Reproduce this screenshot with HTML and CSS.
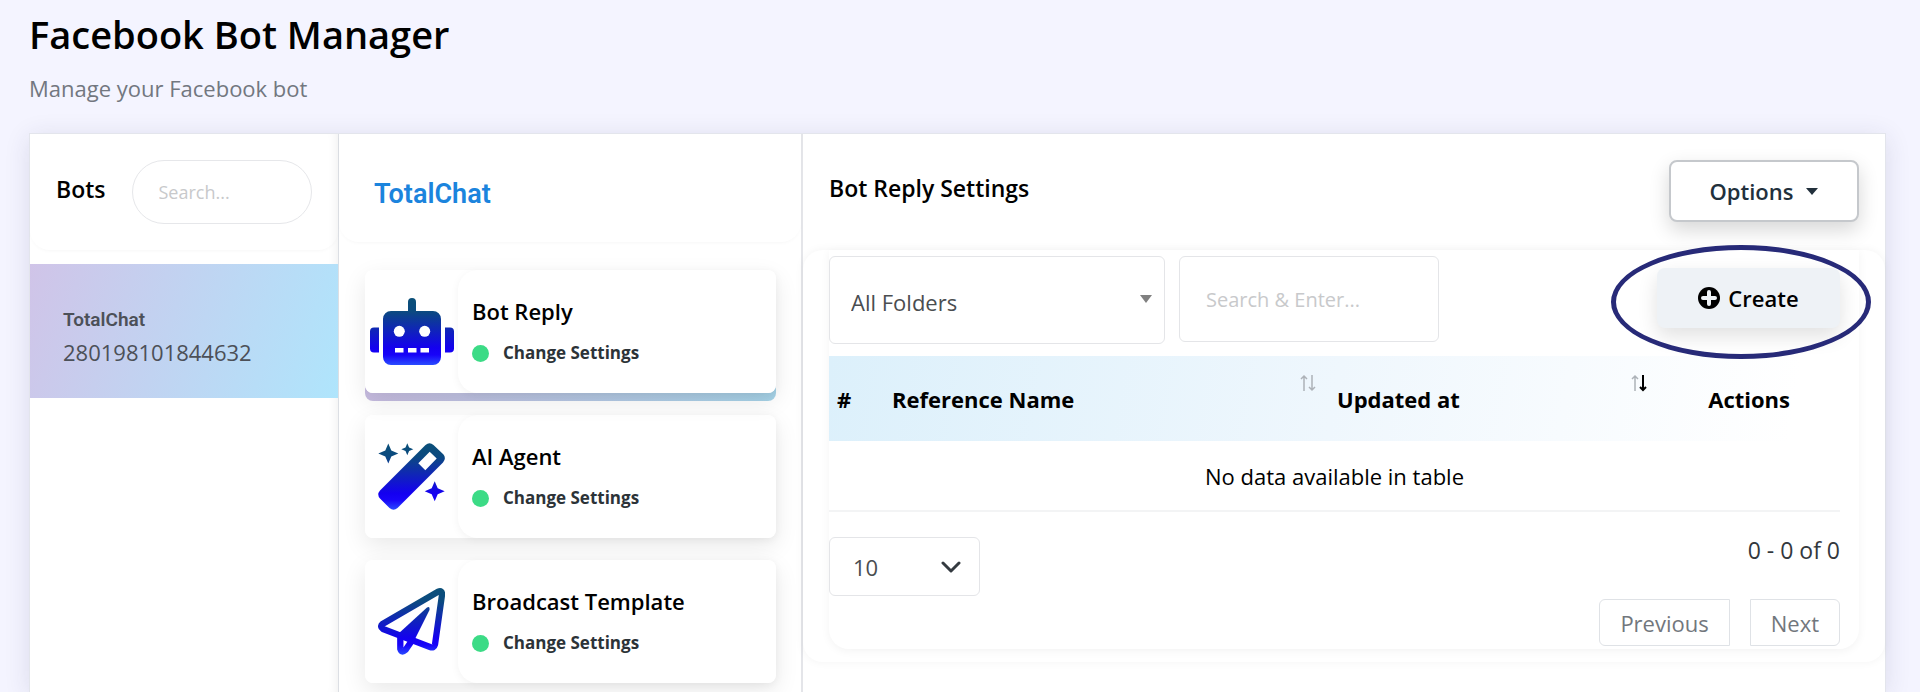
FILE: index.html
```html
<!DOCTYPE html>
<html lang="en">
<head>
  <meta charset="UTF-8" />
  <meta name="viewport" content="width=device-width, initial-scale=1.0"/>
  <title>Facebook Bot Manager</title>
  <link rel="stylesheet" href="styles.css">
</head>
<body>

  <header class="page-header">
    <h1>Facebook Bot Manager</h1>
    <p>Manage your Facebook bot</p>
  </header>

  <main class="panel">
    <!-- Bot list -->
    <section class="bots">
      <div class="bots-header">
        <h2><label for="botSearch">Bots</label></h2>
        <input type="text" id="botSearch" class="bot-search" placeholder="Search..." />
      </div>
      <a href="#" class="bot-item active">
        <strong>TotalChat</strong>
        <span>280198101844632</span>
      </a>
    </section>

    <!-- Settings menu -->
    <section class="menu">
      <div class="menu-header">
        <a href="#" class="page-name">TotalChat</a>
      </div>
      <div class="menu-list">
        <div class="card selected">
          <div class="card-icon">
            <svg width="84" height="68" viewBox="0 0 84 68">
              <defs>
                <linearGradient id="blue" gradientUnits="userSpaceOnUse" x1="0" y1="0" x2="0" y2="67">
                  <stop offset="0" stop-color="#0b5078" />
                  <stop offset="0.2" stop-color="#0b4a80" />
                  <stop offset="0.75" stop-color="#1400f0" />
                  <stop offset="0.85" stop-color="#1804f8" />
                  <stop offset="1" stop-color="#2a4cff" />
                </linearGradient>
              </defs>
              <g fill="url(#blue)">
                <path d="M38 13V4a4 4 0 0 1 8 0v9h17a8 8 0 0 1 8 8v38a8 8 0 0 1-8 8H21a8 8 0 0 1-8-8V21a8 8 0 0 1 8-8z" />
                <path d="M4 29.500h5v25H4a4 4 0 0 1-4-4v-17a4 4 0 0 1 4-4zM75 29.500h5a4 4 0 0 1 4 4v17a4 4 0 0 1-4 4h-5z" />
              </g>
              <g fill="#fff">
                <circle cx="29.300" cy="33.300" r="5.500" />
                <circle cx="54.700" cy="33.300" r="5.500" />
                <path d="M25 50h8.500v4.500H25zM38 50h8.500v4.500H38zM50.500 50H59v4.500h-8.500z" />
              </g>
            </svg>
          </div>
          <div class="card-body">
            <h3>Bot Reply</h3>
            <a href="#"><i class="dot"></i>Change Settings</a>
          </div>
        </div>

        <div class="card">
          <div class="card-icon">
            <svg width="67" height="67" viewBox="0 0 67 67" fill="url(#blue)">
              <path fill-rule="evenodd" d="M47.500 2Q51.500-1.500 55.500 2L65.500 11.500Q68.500 15.500 65 19.500L19.500 65Q15.500 68.500 11.500 65L2 55.500Q-1.500 51.500 2 47.500ZM51.700 8.700L40.300 20.300L47.300 27.300L58.700 15.500Z" />
              <path d="M10.300 .6L13.300 7.600L20.300 10.600L13.300 13.600L10.300 20.600L7.300 13.600L.3 10.600L7.300 7.600Z" />
              <path d="M29.300 .3L31.100 4.500L35.300 6.300L31.100 8.100L29.300 12.300L27.500 8.100L23.300 6.300L27.500 4.500Z" />
              <path d="M56.700 38.300L59.700 45.300L66.700 48.300L59.700 51.300L56.700 58.300L53.700 51.300L46.700 48.300L53.700 45.300Z" />
            </svg>
          </div>
          <div class="card-body">
            <h3>AI Agent</h3>
            <a href="#"><i class="dot"></i>Change Settings</a>
          </div>
        </div>

        <div class="card">
          <div class="card-icon">
            <svg width="67" height="67" viewBox="0 0 67 67">
              <path fill="none" stroke="url(#blue)" stroke-width="6.300" stroke-linejoin="round" d="M4.500 36L60 3.700Q64.500 2 64 7L57 56.500Q56 60.500 52 59L5 41Q1.500 38.500 4.500 36Z" />
              <path fill="none" stroke="url(#blue)" stroke-width="6.300" stroke-linejoin="round" d="M22.300 46V61Q23.500 65.500 27.500 62L35 51" />
              <path fill="url(#blue)" d="M49 19.500Q52 17.500 51.500 22L36 53L20 46Z" />
            </svg>
          </div>
          <div class="card-body">
            <h3>Broadcast Template</h3>
            <a href="#"><i class="dot"></i>Change Settings</a>
          </div>
        </div>
      </div>
    </section>

    <!-- Bot reply settings -->
    <section class="settings">
      <div class="settings-header">
        <h2>Bot Reply Settings</h2>
        <button class="options">Options <i class="caret"></i></button>
      </div>

      <div class="settings-body">
        <div class="table-card">
          <div class="filters">
            <select class="folders" aria-label="Folder">
              <option>All Folders</option>
            </select>
            <input type="text" class="search" placeholder="Search &amp; Enter..." aria-label="Search" />
            <div class="create-wrap">
              <button class="create">
                <svg width="22" height="22" viewBox="0 0 22 22">
                  <circle cx="11" cy="11" r="11" />
                  <path d="M11 5v12M5 11h12" stroke="#eef2f6" stroke-width="4" stroke-linecap="round" />
                </svg>
                Create
              </button>
              <span class="highlight"></span>
            </div>
          </div>

          <table>
            <thead>
              <tr>
                <th class="col-id">#</th>
                <th class="col-name"><div class="th">Reference Name
                  <svg width="18" height="18" viewBox="0 0 18 18" fill="none" stroke="#adb2b8" stroke-width="1.500">
                    <path d="M5 17V2M2 5l3-3 3 3" />
                    <path d="M13 1v15M10 13l3 3 3-3" />
                  </svg></div>
                </th>
                <th class="col-date"><div class="th">Updated at
                  <svg width="18" height="18" viewBox="0 0 18 18" fill="none" stroke="#adb2b8" stroke-width="1.500">
                    <path d="M5 17V2M2 5l3-3 3 3" />
                    <path d="M13 1v15M10 13l3 3 3-3" stroke="#000" stroke-width="2" />
                  </svg></div>
                </th>
                <th class="col-actions">Actions</th>
              </tr>
            </thead>
            <tbody>
              <tr>
                <td colspan="4">No data available in table</td>
              </tr>
            </tbody>
          </table>

          <div class="table-footer">
            <select class="page-size" aria-label="Rows per page">
              <option>10</option>
            </select>
            <div class="paging">
              <p>0 - 0 of 0</p>
              <div class="pages">
                <button class="prev">Previous</button>
                <button class="next">Next</button>
              </div>
            </div>
          </div>
        </div>
      </div>
    </section>
  </main>

</body>
</html>
```

FILE: styles.css
```css
* {
  box-sizing: border-box;
}

body {
  font-family: 'Segoe UI', 'Open Sans', 'Noto Sans', sans-serif;
  font-size: 22px;
  line-height: 32px;
  margin: 0;
  padding: 0 34px 0 29px;
  min-height: 100vh;
  display: flex;
  flex-direction: column;
  background-color: #f4f4ff;
  color: #000;
}

h1, h2, h3, p {
  margin: 0;
}

h2 {
  font-size: 23px;
  font-weight: 600;
}

h3 {
  font-size: 22px;
  font-weight: 600;
}

a {
  text-decoration: none;
}

button, input, select {
  font-family: inherit;
  font-size: 22px;
}

.page-header {
  padding: 6px 0 29px;
}

.page-header h1 {
  font-size: 38px;
  font-weight: 600;
  line-height: 56px;
}

.page-header p {
  margin-top: 10px;
  color: #727780;
}

.panel {
  position: relative;
  z-index: 0;
  flex: 1;
  display: grid;
  grid-template-columns: 309px 464px 1fr;
  background-color: #fff;
  border: 1px solid #e3e5ec;
  border-bottom: none;
  box-shadow: 0 4px 24px rgba(40, 40, 90, 0.12);
}

/* Bot list */
.bots {
  border-right: 1px solid #dcdfe4;
  box-shadow: inset -10px 0 12px -10px rgba(0, 0, 0, 0.08);
}

.bots-header {
  display: flex;
  align-items: center;
  gap: 26px;
  height: 116px;
  padding: 0 26px;
  border-radius: 0 0 20px 20px;
  box-shadow: 0 2px 4px -2px rgba(0, 0, 0, 0.05);
}

.bots-header h2 {
  padding-bottom: 6px;
}

.bot-search {
  flex: 1;
  min-width: 0;
  height: 64px;
  padding: 0 26px;
  font-size: 18px;
  border: 1px solid #e6e7ea;
  border-radius: 32px;
  background-color: #fff;
}

::placeholder {
  color: #c8c9cb;
  opacity: 1;
}

.bot-item {
  display: block;
  margin-top: 14px;
  padding: 40px 33px 30px;
  color: #4c5058;
}

.bot-item.active {
  background: linear-gradient(110deg, #d0c4e8, #afe5fc);
}

.bot-item strong {
  display: block;
  font-family: Roboto, sans-serif;
  font-size: 19px;
  font-weight: 600;
  line-height: 32px;
}

.bot-item span {
  display: block;
}

/* Settings menu */
.menu {
  border-right: 2px solid #e4e5e9;
}

.menu-header {
  height: 108px;
  padding: 44px 35px 0;
  border-radius: 0 0 20px 20px;
  box-shadow: 0 2px 4px -2px rgba(0, 0, 0, 0.05);
}

.page-name {
  font-family: Roboto, sans-serif;
  font-size: 27px;
  font-weight: 600;
  color: #1b84dd;
}

.menu-list {
  display: flex;
  flex-direction: column;
  gap: 22px;
  padding: 28px 25px 8px 26px;
}

.card {
  display: flex;
  height: 123px;
  background-color: #fff;
  border-radius: 8px;
  box-shadow: 0 8px 24px rgba(0, 0, 0, 0.09);
}

.card.selected {
  position: relative;
}

.card.selected::after {
  content: "";
  position: absolute;
  z-index: -1;
  inset: 90px 0 -8px;
  border-radius: 8px;
  background: linear-gradient(90deg, #c6bbdf, #a6d3e8);
}

.card-icon {
  flex: 0 0 93px;
  display: flex;
  align-items: center;
  justify-content: center;
  background-color: #fff;
  border-radius: 8px;
}

.card-body {
  flex: 1;
  padding: 25px 14px 0;
  background-color: #fff;
  border-radius: 20px 8px 8px 20px;
  box-shadow: 0 2px 8px rgba(0, 0, 0, 0.05);
}

.card-body a {
  display: flex;
  align-items: center;
  gap: 14px;
  margin-top: 10px;
  font-size: 17px;
  font-weight: 700;
  color: #2c3338;
}

.dot {
  width: 17px;
  height: 17px;
  border-radius: 50%;
  background-color: #3cdb86;
}

/* Bot reply settings */
.settings-header {
  display: flex;
  align-items: flex-start;
  justify-content: space-between;
  padding: 26px 26px 28px;
}

.settings-header h2 {
  padding-top: 12px;
}

.options {
  display: flex;
  align-items: center;
  justify-content: center;
  gap: 13px;
  width: 190px;
  height: 62px;
  font-weight: 600;
  color: #22303c;
  background-color: #fff;
  border: 2px solid #c5c8cc;
  border-radius: 8px;
  box-shadow: 0 8px 20px rgba(0, 0, 0, 0.16);
}

.caret {
  border: 6px solid transparent;
  border-top: 7px solid #22303c;
  border-bottom: none;
}

.settings-body {
  padding: 0 26px 13px;
  border-radius: 20px;
  box-shadow: 0 0 10px rgba(0, 0, 0, 0.05);
}

.table-card {
  padding: 6px 19px 3px 0;
  border-radius: 0 0 20px 20px;
  box-shadow: 0 2px 10px rgba(0, 0, 0, 0.05);
}

.filters {
  display: flex;
  align-items: flex-start;
  gap: 14px;
  padding-bottom: 12px;
}

.folders, .search, .page-size {
  border: 1px solid #e4e5e8;
  border-radius: 6px;
  background-color: #fff;
}

.folders, .page-size {
  appearance: none;
  color: #4a4d50;
  background-repeat: no-repeat;
}

.folders {
  width: 336px;
  height: 88px;
  padding: 4px 21px 0;
  background-image: url("data:image/svg+xml,%3Csvg xmlns='http://www.w3.org/2000/svg' width='12' height='8'%3E%3Cpath d='M0 0h12L6 8z' fill='%23808080'/%3E%3C/svg%3E");
  background-position: right 12px top 38px;
}

.search {
  width: 260px;
  height: 86px;
  padding: 0 26px;
  font-size: 20px;
}

.create-wrap {
  position: relative;
  margin: 12px 0 0 auto;
}

.create {
  display: flex;
  align-items: center;
  justify-content: center;
  gap: 8px;
  width: 183px;
  height: 60px;
  font-weight: 600;
  color: #000;
  background-color: #eef2f6;
  border: none;
  border-radius: 8px;
  box-shadow: 0 8px 20px rgba(0, 0, 0, 0.12);
}

/* Ring round the Create button */
.highlight {
  position: absolute;
  inset: -23px -31px -31px -46px;
  border: 5px solid #272a78;
  border-radius: 50%;
  pointer-events: none;
}

table {
  width: 100%;
  border-collapse: collapse;
}

thead tr {
  background: linear-gradient(100deg, #dcf0fb, #eff7fd 50%, #fff 95%);
}

th {
  height: 85px;
  padding: 0 8px;
  font-weight: 700;
  text-align: left;
}

.col-id {
  width: 55px;
}

.col-name {
  width: 445px;
}

.col-actions {
  width: 180px;
  padding-right: 50px;
  text-align: right;
}

.th {
  display: flex;
  justify-content: space-between;
}

.th svg {
  margin: -9px 4px 0 0;
}

td {
  height: 70px;
  padding: 0;
  text-align: center;
  border-bottom: 2px solid #f3f4f5;
}

.table-footer {
  display: flex;
  justify-content: space-between;
  padding-top: 25px;
}

.page-size {
  width: 151px;
  height: 59px;
  padding: 0 23px;
  background-image: url("data:image/svg+xml,%3Csvg xmlns='http://www.w3.org/2000/svg' width='20' height='14' fill='none' stroke='%23343a40' stroke-width='3' stroke-linecap='round' stroke-linejoin='round'%3E%3Cpath d='M2 3l8 8 8-8'/%3E%3C/svg%3E");
  background-position: right 18px center;
}

.paging {
  text-align: right;
  color: #33383d;
}

.paging p {
  font-size: 23px;
  line-height: 26px;
}

.pages {
  display: flex;
  justify-content: flex-end;
  gap: 20px;
  margin-top: 36px;
}

.pages button {
  height: 47px;
  padding: 0 20px;
  color: #72777d;
  background-color: #fff;
  border: 1px solid #dfe2e6;
}

.prev {
  border-radius: 6px 0 0 6px;
}

.next {
  border-radius: 0 6px 6px 0;
}
```
